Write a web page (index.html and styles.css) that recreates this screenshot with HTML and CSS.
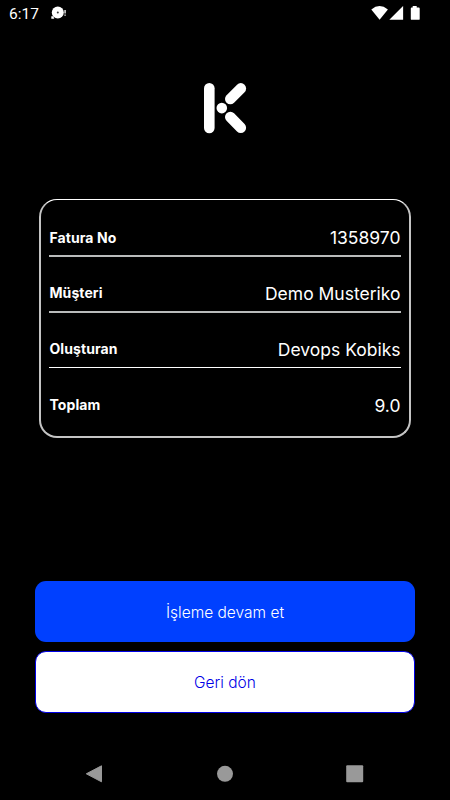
FILE: index.html
```
<!DOCTYPE html>
<html lang="tr">
<head>
    <meta charset="UTF-8">
    <meta name="viewport" content="width=device-width, initial-scale=1.0">
    <title>Fatura</title>
    <link rel="stylesheet" href="styles.css">
</head>
<body>

<!-- Durum çubuğu -->
<header class="status-bar">
    <span class="clock">6:17</span>
    <svg class="notification" width="16" height="14" viewBox="0 0 16 14">
        <circle cx="6.8" cy="6.6" r="6" fill="#fff"/>
        <circle cx="6.8" cy="6.6" r="1" fill="#333"/>
        <path d="M.3 10.3h2l1 2.4H.3z" fill="#fff"/>
        <path d="M13.2 4h1.8v3.5h-1.8zM13.2 8.5h1.8v1.3h-1.8z" fill="#bbb"/>
    </svg>
    <svg class="system-icons" width="50" height="16" viewBox="0 0 50 16">
        <path d="M1.3 3.4Q9.5-3.2 17.9 3.4L9.6 13.8z" fill="#fff"/>
        <path d="M33.1 0v13.8H19.3z" fill="#fff"/>
        <path d="M42.7 0h4v1.5h2.1q.9 0 .9.9v10.5q0 .9-.9.9h-7.1q-.9 0-.9-.9V2.4q0-.9.9-.9h1z" fill="#fff"/>
    </svg>
</header>

<main>
    <svg class="logo" width="44" height="52" viewBox="0 0 44 52">
        <g stroke="#fff" stroke-width="10.6" stroke-linecap="round">
            <path d="M6.3 6.2v39.8"/>
            <path d="M27.3 16.9L37.8 6.4"/>
            <path d="M27.3 35L37.8 45.7"/>
        </g>
        <circle cx="18.8" cy="26.1" r="5.3" fill="#fff"/>
    </svg>

    <div class="card">
        <div class="row">
            <span class="label">Fatura No</span>
            <span class="value">1358970</span>
        </div>
        <div class="row">
            <span class="label">Müşteri</span>
            <span class="value">Demo Musteriko</span>
        </div>
        <div class="row thin">
            <span class="label">Oluşturan</span>
            <span class="value">Devops Kobiks</span>
        </div>
        <div class="row last">
            <span class="label">Toplam</span>
            <span class="value">9.0</span>
        </div>
    </div>

    <div class="buttons">
        <button class="btn btn-primary">İşleme devam et</button>
        <button class="btn btn-secondary">Geri dön</button>
    </div>
</main>

<!-- Android gezinme çubuğu -->
<nav class="nav-bar">
    <svg width="18" height="20" viewBox="0 0 18 20"><path d="M16.5 1.8v16L1.3 9.8z" fill="#999" stroke="#999" stroke-linejoin="round"/></svg>
    <svg width="18" height="20" viewBox="0 0 18 20"><circle cx="9" cy="9.8" r="8" fill="#999"/></svg>
    <svg width="18" height="20" viewBox="0 0 18 20"><rect x=".2" y="1.2" width="17" height="17" rx="1" fill="#999"/></svg>
</nav>

</body>
</html>
```
FILE: styles.css
```
* {
    box-sizing: border-box;
}
body {
    margin: 0;
    height: 800px;
    display: flex;
    flex-direction: column;
    overflow: hidden;
    background-color: #000;
    color: #fff;
    font-family: Inter, sans-serif;
}
/* Durum çubuğu */
.status-bar {
    display: flex;
    align-items: flex-start;
    height: 28px;
    padding: 6px 30px 0 9px;
}
.clock {
    width: 42px;
    font-family: Roboto, sans-serif;
    font-size: 15.5px;
    line-height: 17px;
}
.system-icons {
    margin-left: auto;
}
main {
    flex: 1;
    display: flex;
    flex-direction: column;
    padding: 54px 35px 0;
}
.logo {
    align-self: center;
    fill: none;
}
/* Fatura bilgileri */
.card {
    height: 239px;
    margin: 65px 4px 0;
    padding: 1px 8px 0;
    border: 2px solid #c4c4c4;
    border-top: 1px solid #fff;
    border-radius: 18px;
}
.row {
    display: flex;
    justify-content: space-between;
    align-items: flex-end;
    height: 56px;
    padding: 0 0.5px 7px;
    border-bottom: 2px solid #b9bbbb;
}
.row:first-child {
    padding-bottom: 6px;
}
.row.thin {
    height: 55px;
    border-bottom: 1px solid #fff;
}
.row.last {
    border-bottom: none;
    padding-bottom: 8px;
}
.label {
    font-size: 14px;
    font-weight: 750;
    line-height: 22px;
    letter-spacing: 0.08px;
}
.value {
    margin-bottom: -1px;
    font-size: 17.5px;
    line-height: 22px;
}
.row:first-child .value {
    margin-bottom: 0;
}
/* Butonlar */
.buttons {
    display: flex;
    flex-direction: column;
    gap: 9px;
    margin-top: 143px;
}
.btn {
    height: 61px;
    border: none;
    border-radius: 11px;
    font-family: Inter, sans-serif;
    font-size: 15.5px;
    font-weight: 350;
}
.btn-primary {
    padding-top: 3px;
    background-color: #0040ff;
    color: #fff;
}
.btn-secondary {
    height: 62px;
    border: 1px solid #0000e6;
    background-color: #fff;
    color: #0000e6;
}
.nav-bar {
    display: flex;
    justify-content: space-between;
    height: 36px;
    padding: 0 86px 0 85px;
}
```
